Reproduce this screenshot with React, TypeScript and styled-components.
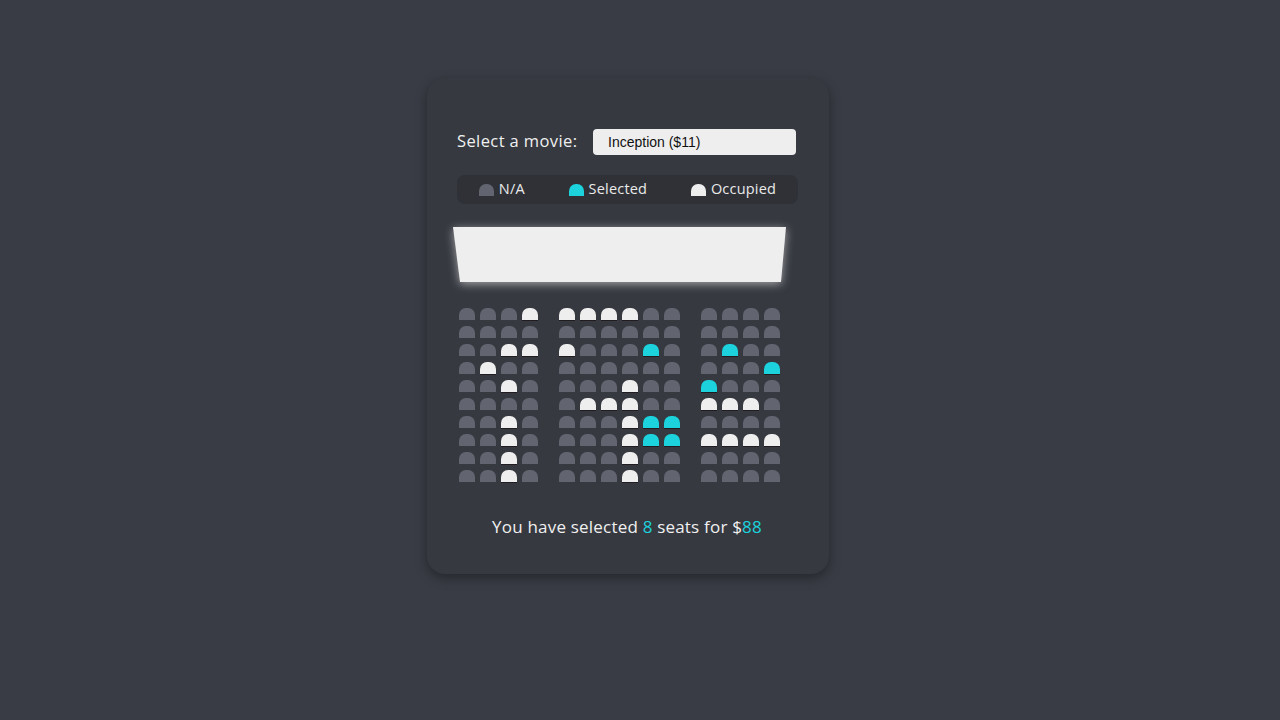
import React from "react";
import styled, { createGlobalStyle } from "styled-components";

const GlobalStyle = createGlobalStyle`
  html, body { margin: 0; padding: 0; }
  body {
    background: #393c44;
    font-family: "Open Sans", "Noto Sans", sans-serif;
    color: #eeeeee;
  }
`;

const Page = styled.div`
  min-height: 720px;
  display: flex;
  justify-content: center;
  align-items: flex-start;
  padding-top: 78px;
  box-sizing: border-box;
`;

const Card = styled.div`
  width: 402px;
  height: 496px;
  box-sizing: border-box;
  padding: 51px 31px 0 30px;
  background: #363940;
  border-radius: 18px;
  box-shadow: 0 4px 12px rgba(0, 0, 0, 0.35);
  display: flex;
  flex-direction: column;
  margin-right: 24px;
`;

const MovieRow = styled.div`
  display: flex;
  align-items: center;
  justify-content: space-between;
  height: 26px;
  padding-right: 2px;
`;

const Label = styled.label`
  font-size: 16.5px;
  line-height: 20px;
  margin-top: -3px;
  color: #f0f0f0;
  letter-spacing: 0.4px;
`;

const Select = styled.select`
  appearance: none;
  -webkit-appearance: none;
  width: 203px;
  height: 26px;
  border: none;
  border-radius: 4px;
  background: #eeeeee;
  padding: 0 15px;
  font-family: "Liberation Sans", Arial, sans-serif;
  font-size: 14px;
  color: #111;
  outline: none;
`;

const Legend = styled.ul`
  list-style: none;
  margin: 20px 0 0 0;
  padding: 0;
  height: 29px;
  border-radius: 8px;
  background: #2f3137;
  display: flex;
  align-items: center;
  justify-content: space-around;
`;

const LegendItem = styled.li`
  display: flex;
  align-items: center;
  gap: 5px;
  font-size: 14.5px;
  line-height: 18px;
  font-weight: 500;
  letter-spacing: 0.2px;
  color: #eaeaea;
`;

const LegendText = styled.span`
  margin-top: -2px;
`;

type Kind = "na" | "sel" | "occ";

const seatColor = (k: Kind) =>
  k === "sel" ? "#1cd2dc" : k === "occ" ? "#eeeeee" : "#626570";

const LegendSeat = styled.span<{ $kind: Kind }>`
  display: block;
  width: 15px;
  height: 12px;
  border-radius: 7px 7px 0 0;
  background: ${(p) => seatColor(p.$kind)};
`;

const Theater = styled.div`
  width: 333px;
  margin-left: -4px;
  display: flex;
  flex-direction: column;
  align-items: center;
`;

const ScreenGlow = styled.div`
  margin-top: 23px;
  width: 333px;
  filter: drop-shadow(0 2px 5px rgba(255, 255, 255, 0.55));
`;

const Screen = styled.div`
  height: 55px;
  background: #eeeeee;
  clip-path: polygon(0 0, 100% 0, calc(100% - 5px) 100%, 7px 100%);
`;

const Seats = styled.div`
  margin-top: 26px;
  display: flex;
  flex-direction: column;
  gap: 6px;
`;

const Row = styled.div`
  display: flex;
  gap: 5px;
`;

const Seat = styled.span<{ $kind: Kind; $aisle: boolean }>`
  display: block;
  width: 16px;
  height: 12px;
  border-radius: 7px 7px 0 0;
  background: ${(p) => seatColor(p.$kind)};
  margin-right: ${(p) => (p.$aisle ? "16px" : "0")};
  box-shadow: ${(p) =>
    p.$kind === "na" ? "none" : "0 1px 0 rgba(20, 10, 10, 0.6)"};
`;

const Summary = styled.p`
  margin: 33px 0 0 0;
  text-align: center;
  font-size: 17px;
  letter-spacing: 0.2px;
  color: #f0f0f0;
  margin-left: -1px;
`;

const Accent = styled.span`
  color: #1cd2dc;
`;

const layout = [
  "gggW WWWWgg gggg",
  "gggg gggggg gggg",
  "ggWW WgggCg gCgg",
  "gWgg gggggg gggC",
  "ggWg gggWgg Cggg",
  "gggg gWWWgg WWWg",
  "ggWg gggWCC gggg",
  "ggWg gggWCC WWWW",
  "ggWg gggWgg gggg",
  "ggWg gggWgg gggg",
];

const toKind = (c: string): Kind => (c === "W" ? "occ" : c === "C" ? "sel" : "na");

export default function App() {
  return (
    <>
      <GlobalStyle />
      <Page>
        <Card>
          <MovieRow>
            <Label htmlFor="movie">Select a movie:</Label>
            <Select id="movie" defaultValue="11">
              <option value="11">Inception ($11)</option>
              <option value="10">Interstellar ($10)</option>
              <option value="12">Tenet ($12)</option>
            </Select>
          </MovieRow>
          <Legend>
            <LegendItem>
              <LegendSeat $kind="na" />
              <LegendText>N/A</LegendText>
            </LegendItem>
            <LegendItem>
              <LegendSeat $kind="sel" />
              <LegendText>Selected</LegendText>
            </LegendItem>
            <LegendItem>
              <LegendSeat $kind="occ" />
              <LegendText>Occupied</LegendText>
            </LegendItem>
          </Legend>
          <Theater>
            <ScreenGlow>
              <Screen />
            </ScreenGlow>
            <Seats>
              {layout.map((r, ri) => {
                const blocks = r.split(" ");
                const cells: { k: Kind; aisle: boolean }[] = [];
                blocks.forEach((b, bi) =>
                  b.split("").forEach((c, ci) =>
                    cells.push({
                      k: toKind(c),
                      aisle: bi < blocks.length - 1 && ci === b.length - 1,
                    })
                  )
                );
                return (
                  <Row key={ri}>
                    {cells.map((s, si) => (
                      <Seat key={si} $kind={s.k} $aisle={s.aisle} />
                    ))}
                  </Row>
                );
              })}
            </Seats>
          </Theater>
          <Summary>
            You have selected <Accent>8</Accent> seats for $<Accent>88</Accent>
          </Summary>
        </Card>
      </Page>
    </>
  );
}
